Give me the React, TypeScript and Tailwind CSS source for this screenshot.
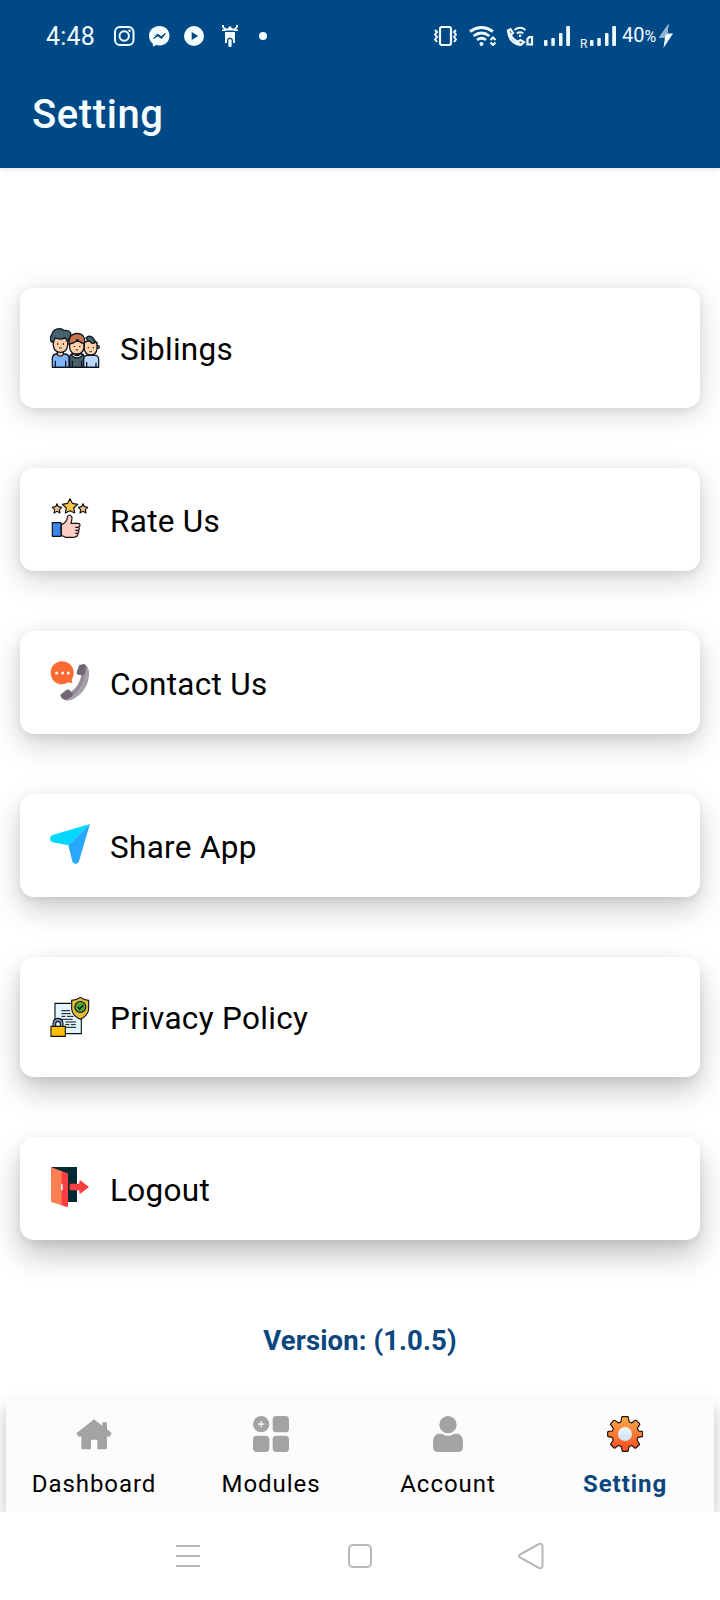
import type {ReactNode} from "react";

interface SettingItem {
    label: string;
    icon: ReactNode;
    tall?: boolean;
    shadow: string;
}

interface Tab {
    label: string;
    icon: ReactNode;
    active?: boolean;
}

const SiblingsIcon = () => (
    <svg width="50" height="40" viewBox="0 0 150 120" stroke="#0b1420" strokeWidth="3.8" strokeLinejoin="round">
        {/* older brother */}
        <path d="M7 118V92q0-14 14-14h22q14 0 14 14v26z" fill="#7fb6fb"/>
        <path d="M22 68h18v12q-9 9-18 0z" fill="#fcc9a0"/>
        <path d="M10 30v22q2 20 21 21t22-21V30z" fill="#fdd0a8"/>
        <path d="M3 40q-4-12 2-20Q10 3 28 2q10 0 14 6 14-3 20 7 2 10-6 17l-3 11-7-14q-14 8-31 1l-5 14z" fill="#46636d"/>
        <path d="M16 118V98M47 118V98" fill="none"/>
        {/* sister */}
        <path d="M59 118V90q0-13 12-13h20q12 0 12 13v28z" fill="#4a6068"/>
        <path d="M69 76q12 14 24 0l4 6q-16 16-32 0z" fill="#eef6ff"/>
        <path d="M59 40v20q3 18 21 18t22-18V40z" fill="#fdd0a8"/>
        <path d="M57 50q-3-32 24-34 26 0 23 34l-4-4q-12-2-18-12-6 12-20 13z" fill="#c9734f"/>
        <path d="M67 118V98M95 118V98" fill="none"/>
        {/* little brother */}
        <path d="M101 118V94q0-12 12-12h22q10 0 11 12v24z" fill="#b8d8fc"/>
        <circle cx="144" cy="57" r="4" fill="#fdd0a8"/>
        <path d="M103 44q18-13 38 0v20q-3 17-19 17t-19-17z" fill="#fdd0a8"/>
        <path d="M108 30q8-10 18-3 9 6 8 18-9 4-14-5-8-1-12-10z" fill="#46636d"/>
        <path d="M132 36q7 3 9 12" fill="none"/>
        <path d="M110 118v-16M138 118v-14" fill="none"/>
        <path d="M6 118h140" fill="none"/>
        <path d="M23 46v4M40 46v4M73 54v3M89 54v3M115 58v3M130 58v3" fill="none"/>
        <path d="M27 59q5 4 9 0M77 65q4 3 8 0M118 70q4 3 8 0" fill="none" strokeWidth="2.500"/>
    </svg>
);

const RateIcon = () => (
    <svg width="40" height="40" viewBox="0 0 120 120" stroke="#12100e" strokeWidth="3.500" strokeLinejoin="round">
        <path d="M60 2l7 14 16 3-12 11 3 15-14-7-14 7 3-15-12-11 16-3z" fill="#f9c74f"/>
        <path d="M21 17l4 9 10 2-7 7 2 10-9-5-9 5 2-10-7-7 10-2z" fill="#f6c98a"/>
        <path d="M99 17l4 9 10 2-7 7 2 10-9-5-9 5 2-10-7-7 10-2z" fill="#f6c98a"/>
        <path d="M34 80q16-6 18-22 1-7 6-7t8 7q0 9-3 18h20q7 0 7 6 0 4-4 6 4 4 0 9 2 5-2 8 0 13-13 13H46l-12-6z" fill="#fdcdc6"/>
        <path d="M7 74h26v41H7z" fill="#3d86ec"/>
        <path d="M76 88h10M76 97h10M76 106h8" fill="none"/>
    </svg>
);

const ContactIcon = () => (
    <svg width="40" height="40" viewBox="0 0 120 120">
        <path d="M36 1c20 0 35 15 35 34 0 8-3 15-6 21l2 11-12-3c-6 4-12 6-19 6C17 70 2 54 2 35S17 1 36 1z" fill="#fb6a32"/>
        <circle cx="20" cy="36" r="4.500" fill="#fff"/>
        <circle cx="38" cy="36" r="4.500" fill="#fff"/>
        <circle cx="55" cy="36" r="4.500" fill="#fff"/>
        <path d="M101 10q16 6 16 30-3 48-44 72-22 13-40-3l30-16q25-18 31-50z" fill="#968c99"/>
        <path d="M111 16q8 16 3 36-8 40-43 61-18 10-32 2 22-2 38-18 28-27 34-81z" fill="#aaa1ad"/>
        <path d="M88 12l14-3q7 2 6 8l-5 22q-3 5-9 4l-10-2q-5-2-4-8z" fill="#6f6573"/>
        <path d="M31 101l19-15q5-2 9 2l8 9q3 5-1 9l-16 10q-17 0-19-15z" fill="#6f6573"/>
    </svg>
);

const ShareIcon = () => (
    <svg width="40" height="40" viewBox="0 0 120 120">
        <path d="M120 0L8 33q-8 3-8 11t8 11l47 9z" fill="#00d8ff"/>
        <path d="M120 0L55 64l12 48q3 8 10 8t10-8z" fill="#28a8fc"/>
    </svg>
);

const PrivacyIcon = () => (
    <svg width="40" height="40" viewBox="0 0 120 120" stroke="#0c1116" strokeWidth="3.300">
        <path d="M15 19h79v91H15z" fill="#e3f6fe"/>
        <path d="M34 41h26M34 50h28M34 58h12M51 58h20M34 67h34M46 75h32M46 83h12M63 83h14M46 91h32" fill="none" strokeWidth="3"/>
        <path d="M91 1q12 9 25 9v26q-2 20-25 31Q67 56 65 36V10q14 0 26-9z" fill="#e3bd35"/>
        <circle cx="91" cy="30" r="16.500" fill="#4ca637"/>
        <path d="M83 30l6 6 11-11" fill="none" strokeWidth="4"/>
        <path d="M9 89V79q2-15 15-15t15 15v10h-8V80q-1-7-7-7t-7 7v9z" fill="#8298c4"/>
        <path d="M3 88h43v30H3z" fill="#fdbe00"/>
    </svg>
);

const LogoutIcon = () => (
    <svg width="40" height="40" viewBox="0 0 120 120">
        <path d="M4 0h77v105H4z" fill="#062a33"/>
        <path d="M3 0l51 20v96q0 4-5 3L3 105z" fill="#ff7f55"/>
        <path d="M35 13l19 8v95q0 4-5 3l-14-5z" fill="#fb3f40"/>
        <rect x="33" y="51" width="5" height="19" rx="2" fill="#dff5ff"/>
        <path d="M61 50h27v-7q1-4 5-2l24 19-24 19q-4 2-5-2v-7H61q-2 0-2-3V53q0-3 2-3z" fill="#fb3f40"/>
    </svg>
);

const HomeIcon = () => (
    <svg width="36" height="36" viewBox="0 0 108 108" fill="#a3a3a3">
        <path d="M54 10l25 19v-8q0-2 2-2h10q2 0 2 2v19l13 10q2 2 0 4l-6 8q-2 2-4 0l-3-2v36q0 4-4 4H64V73q0-2-3-2H48q-3 0-3 2v27H20q-4 0-4-4V60l-3 2q-2 2-4 0l-7-8q-1-2 1-4z"/>
    </svg>
);

const ModulesIcon = () => (
    <svg width="36" height="36" viewBox="0 0 108 108" fill="#a3a3a3">
        <circle cx="24.500" cy="24.500" r="24.500"/>
        <rect x="59" width="49" height="49" rx="11"/>
        <rect y="59" width="49" height="49" rx="11"/>
        <rect x="59" y="59" width="49" height="49" rx="11"/>
        <path d="M24.500 15v19M15 24.500h19" stroke="#fff" strokeWidth="3.500"/>
    </svg>
);

const AccountIcon = () => (
    <svg width="36" height="36" viewBox="0 0 108 108" fill="#a3a3a3">
        <circle cx="54" cy="26" r="26"/>
        <path d="M24 53h8q5 0 9 3 13 7 26 0 4-3 9-3h8q15 5 15 25v14q0 16-16 16H25Q9 108 9 92V78q0-20 15-25z"/>
    </svg>
);

const GearIcon = () => (
    <svg width="36" height="36" viewBox="0 0 108 108">
        <defs>
            <linearGradient id="gear" x1="0" y1="0" x2="0" y2="1">
                <stop offset="0" stopColor="#fdab45"/>
                <stop offset="1" stopColor="#fb4a22"/>
            </linearGradient>
            <linearGradient id="hub" x1="0" y1="0" x2="0" y2="1">
                <stop offset="0" stopColor="#e9f2fb"/>
                <stop offset="1" stopColor="#cfe2f6"/>
            </linearGradient>
        </defs>
        <path
            d="M44 4q1-2 3-2h14q3 0 3 2l2 13 8 4 11-8q2-1 4 1l8 8q2 2 1 4l-7 11 4 8 9 1q3 1 3 3v10q0 3-3 3l-11 2-3 8 7 11q1 2-1 4l-9 9q-2 1-4 0l-9-8-8 4-2 11q0 3-3 3H48q-3 0-3-3l-2-11-8-4-11 8q-2 1-4-1l-8-8q-2-2 0-4l7-11-4-8-10-2q-3 0-3-3V49q0-2 3-3l11-1 3-8-8-11q-1-2 1-4l9-9q2-1 4 1l10 7 7-4z"
            fill="url(#gear)" stroke="#1b120c" strokeWidth="3.500"/>
        <circle cx="54" cy="54" r="21" fill="url(#hub)"/>
    </svg>
);

const SignalIcon = () => (
    <svg width="26" height="20" viewBox="0 0 26 20" fill="#f0fbff">
        <rect y="14" width="3.500" height="6" rx="1"/>
        <rect x="7.300" y="12" width="3.500" height="8" rx="1"/>
        <rect x="15" y="7" width="3.500" height="13" rx="1"/>
        <rect x="22.200" width="3.800" height="20" rx="1"/>
    </svg>
);

const StatusBar = () => (
    <div className="flex h-[72px] items-center text-[#f0fbff]">
        <span className="ml-[46px] w-[68px] pt-px text-[25px] leading-[30px] tracking-[0.2px]">4:48</span>
        <svg width="21" height="20" viewBox="0 0 21 20" fill="none" stroke="#f0fbff" strokeWidth="2">
            <rect x="1" y="1" width="18.500" height="18" rx="5"/>
            <circle cx="10.200" cy="10" r="4.700"/>
            <circle cx="15.600" cy="4.800" r="1.300" fill="#f0fbff" stroke="none"/>
        </svg>
        <svg className="ml-[14px]" width="21" height="21" viewBox="0 0 21 21">
            <path d="M10.500 0C16.500 0 20.500 4.300 20.500 9.700s-4 9.800-10 9.800c-1.200 0-2.200-.2-3.200-.5L4 20.500l-.3-3C1.300 15.800 0 13 0 9.700 0 4.300 4.500 0 10.500 0z" fill="#f5fdff"/>
            <path d="M4.500 12.500l4-4.500 3.500 2.700 4.500-3.200-4 5-3.700-2.700z" fill="#004987" stroke="#004987"/>
        </svg>
        <svg className="ml-[14px]" width="20" height="20" viewBox="0 0 20 20">
            <circle cx="10" cy="10" r="10" fill="#f5fdff"/>
            <path d="M7.700 6v8l6.500-4z" fill="#004987"/>
        </svg>
        <svg className="ml-[18px]" width="16" height="22" viewBox="0 0 16 22" fill="#f5fdff">
            <path d="M0 0h2v2l2 1.500h2L7 1.500h2l1 2h2L14 2V0h2v2l-3 3.500H3L0 2zM0 4.500h4V6H0zM12 4.500h4V6h-4z"/>
            <path d="M3 7h10v11h-2v-3q-.5-2.500-3-2.500T5 15v3H3z"/>
            <rect x="6.400" y="14" width="3.200" height="8" rx="1.500"/>
        </svg>
        <span className="ml-[21px] h-2 w-2 rounded-full bg-[#f5fdff]"/>

        {/* right side of the bar */}
        <svg className="ml-[167px]" width="23" height="20" viewBox="0 0 23 20" fill="none" stroke="#f0fbff" strokeWidth="2.200">
            <rect x="6" y="1" width="11" height="18" rx="2"/>
            <path d="M1 4l2 2-2 2.500 2 2.500-2 2.500 2 2.500M22 4l-2 2 2 2.500-2 2.500 2 2.500-2 2.500" strokeWidth="2"/>
        </svg>
        <svg className="ml-[12px]" width="28" height="20" viewBox="0 0 28 20" fill="none" stroke="#f0fbff" strokeWidth="2.800">
            <path d="M1 5.500Q12.500-2.500 24 5.500M4.500 10q8-6 16 0M8 14q4.500-3.500 9 0"/>
            <circle cx="12.500" cy="18" r="2" fill="#f0fbff" stroke="none"/>
            <path d="M21.500 14l2.500-2.500 2.500 2.500M21.500 16.500L24 19l2.500-2.500" strokeWidth="2"/>
        </svg>
        <svg className="ml-[9px]" width="28" height="20" viewBox="0 0 28 20" fill="none" stroke="#f0fbff" strokeWidth="2.200">
            <path d="M2 4.500l2.500-1.300L7 7 4.500 9z"/>
            <path d="M2 5q1 12 12.500 14M4.500 9q2.500 4.500 6.500 6.500M11 16l3.500-2 3.500 2.200-3 2.600z"/>
            <path d="M8.500 4Q14-.5 19.500 4M10.800 7.500q3.200-2.500 6.500 0" strokeWidth="1.800"/>
            <circle cx="14" cy="9.800" r="1.300" fill="#f0fbff" stroke="none"/>
            <path d="M21.500 18.500v-5.500l1.700-1.800H26v7.300z"/>
        </svg>
        <div className="ml-[10px]"><SignalIcon/></div>
        <span className="mt-[15px] ml-[10px] w-[10px] text-[12px] leading-3">R</span>
        <SignalIcon/>
        <span className="ml-[6px] flex items-baseline text-[20px] leading-6">40<span className="text-[16px]">%</span></span>
        <svg className="ml-[3px]" width="14" height="24" viewBox="0 0 14 24">
            <path d="M9.500 0L0 13.500h6L4.500 24 14 9.500H8.500z" fill="#f5fdff"/>
            <path d="M9.500 0L0 13.500h6l.5-3 7-.5.5-.5H8.500z" fill="#8db4d3"/>
        </svg>
    </div>
);

const items: SettingItem[] = [
    {label: "Siblings", icon: <SiblingsIcon/>, tall: true, shadow: "shadow-[0_5px_30px_rgba(0,0,0,0.16),0_3px_8px_rgba(0,0,0,0.07)]"},
    {label: "Rate Us", icon: <RateIcon/>, shadow: "shadow-[0_8px_30px_rgba(0,0,0,0.18),0_3px_8px_rgba(0,0,0,0.08)]"},
    {label: "Contact Us", icon: <ContactIcon/>, shadow: "shadow-[0_10px_30px_rgba(0,0,0,0.19),0_3px_8px_rgba(0,0,0,0.08)]"},
    {label: "Share App", icon: <ShareIcon/>, shadow: "shadow-[0_12px_30px_rgba(0,0,0,0.2),0_3px_8px_rgba(0,0,0,0.08)]"},
    {label: "Privacy Policy", icon: <PrivacyIcon/>, tall: true, shadow: "shadow-[0_14px_30px_rgba(0,0,0,0.22),0_3px_8px_rgba(0,0,0,0.08)]"},
    {label: "Logout", icon: <LogoutIcon/>, shadow: "shadow-[0_16px_30px_rgba(0,0,0,0.23),0_3px_8px_rgba(0,0,0,0.08)]"},
];

const tabs: Tab[] = [
    {label: "Dashboard", icon: <HomeIcon/>},
    {label: "Modules", icon: <ModulesIcon/>},
    {label: "Account", icon: <AccountIcon/>},
    {label: "Setting", icon: <GearIcon/>, active: true},
];

const SettingCard = ({label, icon, tall, shadow}: SettingItem) => (
    <div className={`flex items-center gap-5 rounded-[14px] bg-white pl-[30px] ${tall ? "h-[120px]" : "h-[103px]"} ${shadow}`}>
        <div className={tall ? "" : "mb-[3px]"}>{icon}</div>
        <span className="pt-[3px] text-[31.500px] leading-[37px] tracking-[0.3px] text-black">{label}</span>
    </div>
);

const App = () => {
    return (
        <div className="flex h-[1600px] w-[720px] flex-col overflow-hidden bg-white font-['Roboto',sans-serif]">
            <header className="h-[168px] shrink-0 bg-[#004987] shadow-[0_1px_6px_rgba(0,0,0,0.12)]">
                <StatusBar/>
                <h1 className="pt-[19px] pl-8 text-[40px] leading-[48px] font-medium tracking-[0.6px] text-[#f5fdff]">Setting</h1>
            </header>

            <main className="flex h-[1231px] shrink-0 flex-col gap-[60px] px-5 pt-[120px]">
                {items.map((item) => <SettingCard key={item.label} {...item}/>)}
                <p className="mt-[25px] text-center text-[27.500px] leading-8 font-bold tracking-[0.1px] text-[#0b467f]">Version: (1.0.5)</p>
            </main>

            <div className="h-[113px] shrink-0 [clip-path:inset(-20px_0_0_0)]">
                <nav className="mx-[6px] grid h-full grid-cols-4 bg-[#fcfcfc] shadow-[0_8px_16px_rgba(0,0,0,0.24)]">
                    {tabs.map((tab) => (
                        <div key={tab.label} className="flex flex-col items-center pt-[17px] pr-[2px]">
                            {tab.icon}
                            <span className={`mt-[17px] pl-px text-[24px] leading-[30px] tracking-[0.95px] ${tab.active ? "font-bold text-[#0b467f]" : "text-black"}`}>
                                {tab.label}
                            </span>
                        </div>
                    ))}
                </nav>
            </div>

            {/* system navigation */}
            <div className="flex h-[88px] items-center pl-[176px]">
                <svg width="24" height="24" viewBox="0 0 24 24" stroke="#b8b8b8" strokeWidth="2">
                    <path d="M0 2h24M0 12h24M0 22h24"/>
                </svg>
                <span className="ml-[148px] h-6 w-6 rounded-[5px] border-2 border-[#b8b8b8]"/>
                <svg className="ml-[146px]" width="26" height="28" viewBox="0 0 26 28" fill="none" stroke="#b8b8b8" strokeWidth="2">
                    <path d="M2 12.500L21 2q3.500-1 3.500 2v20q0 3-3.500 2L2 15.500q-2-1.500 0-3z"/>
                </svg>
            </div>
        </div>
    );
};

export default App;
